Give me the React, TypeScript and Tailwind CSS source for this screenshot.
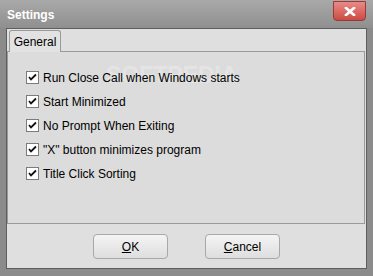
import React from "react";

const items = [
  "Run Close Call when Windows starts",
  "Start Minimized",
  "No Prompt When Exiting",
  "\"X\" button minimizes program",
  "Title Click Sorting",
];

function Check() {
  return (
    <div className="w-[13px] h-[13px] border border-[#7b7b7b] bg-white flex items-center justify-center shrink-0">
      <svg width="9" height="9" viewBox="0 0 9 9">
        <path d="M1 4 L3 6.5 L8 1.5" stroke="#111" strokeWidth="1.8" fill="none" />
      </svg>
    </div>
  );
}

export default function App() {
  return (
    <div
      className="w-[373px] h-[276px] flex flex-col bg-[#8b8b8b] relative overflow-hidden"
      style={{ fontFamily: '"Liberation Sans", Arial, sans-serif' }}
    >
      <div className="h-[28px] flex items-start justify-between bg-gradient-to-b from-[#a9a9a9] to-[#8f8f8f] pl-[7px] pr-[7px] shrink-0">
        <div className="text-white font-bold text-[12px] leading-none mt-[9px]">Settings</div>
        <div className="w-[33px] h-[20px] mt-[1px] rounded-b-[4px] border border-[#9a3a36] bg-gradient-to-b from-[#e88a86] to-[#cc4a44] flex items-center justify-center">
          <svg width="12" height="9" viewBox="0 0 12 9">
            <path d="M2 1 L10 8 M10 1 L2 8" stroke="#fff" strokeWidth="2.6" strokeLinecap="square" />
            <path d="M2 1 L10 8 M10 1 L2 8" stroke="#fff" strokeWidth="2" />
          </svg>
        </div>
      </div>
      <div className="flex-1 ml-[6px] mr-[6px] mb-[7px] border border-[#5e5e5e] bg-[#dfdfdf] flex flex-col pt-[1px]">
        <div className="flex pl-[2px] h-[21px] shrink-0">
          <div className="w-[52px] h-[22px] border border-b-0 border-[#9a9a9a] rounded-tl-[3px] rounded-tr-[3px] bg-[#e2e2e2] text-[12px] text-black flex items-center justify-center relative z-10">
            General
          </div>
        </div>
        <div className="h-[173px] ml-[0px] mr-[1px] border border-[#9a9a9a] bg-[#dcdcdc] flex flex-col pt-[19px] pl-[18px] gap-[11px] relative">
          <div className="absolute left-[98px] top-[12px] text-[23px] font-bold text-white opacity-25 tracking-[0px] leading-none pointer-events-none">
            SOFTPEDIA
          </div>
          {items.map((t) => (
            <div key={t} className="flex items-center gap-[4px] h-[13px] relative">
              <Check />
              <span className="text-[12px] text-black leading-none whitespace-nowrap">{t}</span>
            </div>
          ))}
        </div>
        <div className="flex-1 flex items-start justify-center gap-[37px] pt-[10px]">
          <button className="w-[75px] h-[25px] rounded-[4px] border border-[#a8a8a8] bg-gradient-to-b from-[#f4f4f4] to-[#dedede] text-[12px] text-black">
            <span className="underline">O</span>K
          </button>
          <button className="w-[75px] h-[25px] rounded-[4px] border border-[#a8a8a8] bg-gradient-to-b from-[#f4f4f4] to-[#dedede] text-[12px] text-black">
            <span className="underline">C</span>ancel
          </button>
        </div>
      </div>
    </div>
  );
}
